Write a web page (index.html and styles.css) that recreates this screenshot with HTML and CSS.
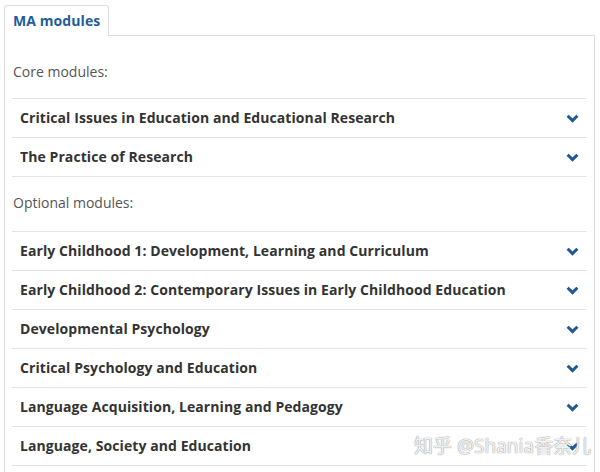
FILE: index.html
```html
<!DOCTYPE html>
<html>
<head>
<meta charset="utf-8">
<link rel="stylesheet" href="styles.css">
</head>
<body>
<div class="tabs">
  <div class="tab">MA modules</div>
</div>
<div class="panel">
  <div class="group-label">Core modules:</div>
  <ul class="modules">
    <li class="module"><span>Critical Issues in Education and Educational Research</span><svg class="chev" viewBox="0 0 12 8"><polyline points="1.5,1.5 6,6 10.5,1.5"/></svg></li>
    <li class="module"><span>The Practice of Research</span><svg class="chev" viewBox="0 0 12 8"><polyline points="1.5,1.5 6,6 10.5,1.5"/></svg></li>
  </ul>
  <div class="group-label optional">Optional modules:</div>
  <ul class="modules">
    <li class="module"><span>Early Childhood 1: Development, Learning and Curriculum</span><svg class="chev" viewBox="0 0 12 8"><polyline points="1.5,1.5 6,6 10.5,1.5"/></svg></li>
    <li class="module"><span>Early Childhood 2: Contemporary Issues in Early Childhood Education</span><svg class="chev" viewBox="0 0 12 8"><polyline points="1.5,1.5 6,6 10.5,1.5"/></svg></li>
    <li class="module"><span>Developmental Psychology</span><svg class="chev" viewBox="0 0 12 8"><polyline points="1.5,1.5 6,6 10.5,1.5"/></svg></li>
    <li class="module"><span>Critical Psychology and Education</span><svg class="chev" viewBox="0 0 12 8"><polyline points="1.5,1.5 6,6 10.5,1.5"/></svg></li>
    <li class="module"><span>Language Acquisition, Learning and Pedagogy</span><svg class="chev" viewBox="0 0 12 8"><polyline points="1.5,1.5 6,6 10.5,1.5"/></svg></li>
    <li class="module"><span>Language, Society and Education</span><svg class="chev" viewBox="0 0 12 8"><polyline points="1.5,1.5 6,6 10.5,1.5"/></svg></li>
  </ul>
</div>
<div class="watermark">知乎 @Shania香奈儿</div>
</body>
</html>
```
FILE: styles.css
```css
html, body {
  margin: 0;
  padding: 0;
  background: #fff;
  overflow: hidden;
}
body {
  font-family: "Open Sans", "Noto Sans", sans-serif;
  font-size: 14px;
  color: #333;
  position: relative;
  height: 472px;
}
.tabs {
  padding: 5px 0 0 4px;
  display: flex;
}
.tab {
  border: 1px solid #ddd;
  border-bottom: none;
  border-radius: 3px 3px 0 0;
  padding: 5px 8px 5px 8px;
  line-height: 20px;
  font-weight: 700;
  color: #1f5d9c;
  white-space: nowrap;
  letter-spacing: 0.08px;
  background: #fff;
  margin-bottom: -1px;
  position: relative;
  z-index: 1;
}
.panel {
  margin: 0 5px 0 4px;
  border: 1px solid #ddd;
  border-bottom: none;
  padding: 10px 7px 6px 7px;
}
.group-label {
  line-height: 20px;
  padding: 16px 0 16px 1px;
  color: #555;
}
.group-label.optional {
  padding-bottom: 18px;
}
.modules {
  list-style: none;
  margin: 0;
  padding: 0;
  border-top: 1px solid #e3e3e3;
}
.module {
  display: flex;
  align-items: center;
  justify-content: space-between;
  padding: 9px 9px 9px 8px;
  line-height: 20px;
  font-weight: 700;
  letter-spacing: 0.08px;
  color: #333;
  border-bottom: 1px solid #e3e3e3;
}
.chev {
  width: 13px;
  height: 9px;
  fill: none;
  stroke: #1d5a94;
  stroke-width: 2.8;
  stroke-linecap: butt;
  stroke-linejoin: miter;
  margin-right: -1px;
}
.watermark {
  position: absolute;
  left: 414px;
  top: 434px;
  font-family: "Noto Sans", "Noto Sans CJK SC", sans-serif;
  font-size: 19px;
  line-height: 24px;
  color: rgba(250, 250, 250, 0.92);
  text-shadow: 0 0 1px #999, 0 0 1px #999;
  white-space: nowrap;
}
```
